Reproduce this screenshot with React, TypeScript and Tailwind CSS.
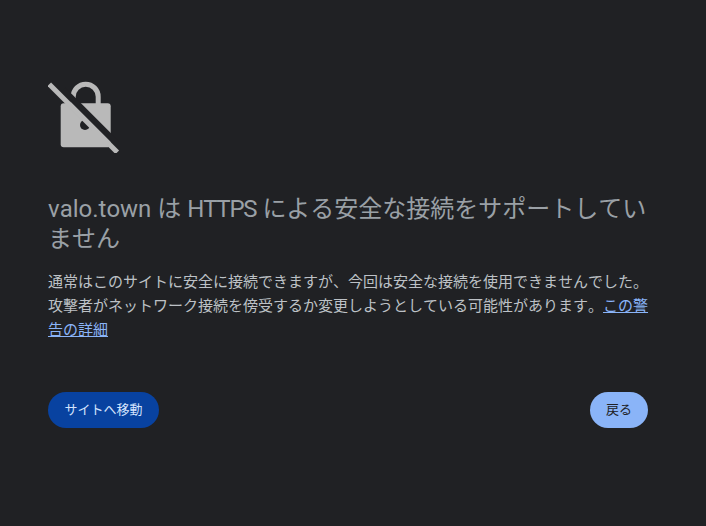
export default function App() {
  return (
    <div className="min-h-[526px] bg-[#202124] px-12 pt-[81px] font-['Roboto','Noto_Sans_CJK_JP',sans-serif] [font-kerning:none]">
      <div className="w-[600px]">
        <svg className="block h-[72px] w-[72px]" viewBox="0 0 72 72" fill="none">
          {/* shackle */}
          <path d="M25.2 24 V15.7 A12.5 12.5 0 0 1 50.2 15.7 V24" stroke="#B9B9B9" strokeWidth="5" />
          {/* lock body */}
          <rect x="12.7" y="22.3" width="50" height="44" rx="3" fill="#B9B9B9" />
          {/* keyhole */}
          <circle cx="37" cy="44" r="5" fill="#202124" />
          {/* gap next to the slash */}
          <path d="M15 8.7 L80 73.7" stroke="#202124" strokeWidth="6.4" />
          {/* slash */}
          <path d="M1.3 3.3 L69.3 71.3" stroke="#B9B9B9" strokeWidth="5" />
        </svg>

        <h1 className="mt-[41px] -mr-1 text-[24px] leading-[30px] font-normal text-[#9AA0A6]">
          valo.town は <span className="tracking-[-1.2px]">HTTPS</span> による安全な接続をサポートしていません
        </h1>

        <p className="mt-4 -mr-1 text-[15px] leading-6 text-[#BDC1C6]">
          通常はこのサイトに安全に接続できますが、今回は安全な接続を使用できませんでした。攻撃者がネットワーク接続を傍受するか変更しようとしている可能性があります。
          <a href="#" className="text-[#8AB4F8] underline">
            この警告の詳細
          </a>
        </p>

        <div className="mt-[50px] flex items-center justify-between">
          <button className="h-9 w-[111px] rounded-full bg-[#0842A0] text-[13px] text-[#D3E3FD]">サイトへ移動</button>
          <button className="h-9 rounded-full bg-[#8AB4F8] px-4 text-[13px] text-[#202124]">戻る</button>
        </div>
      </div>
    </div>
  );
}
